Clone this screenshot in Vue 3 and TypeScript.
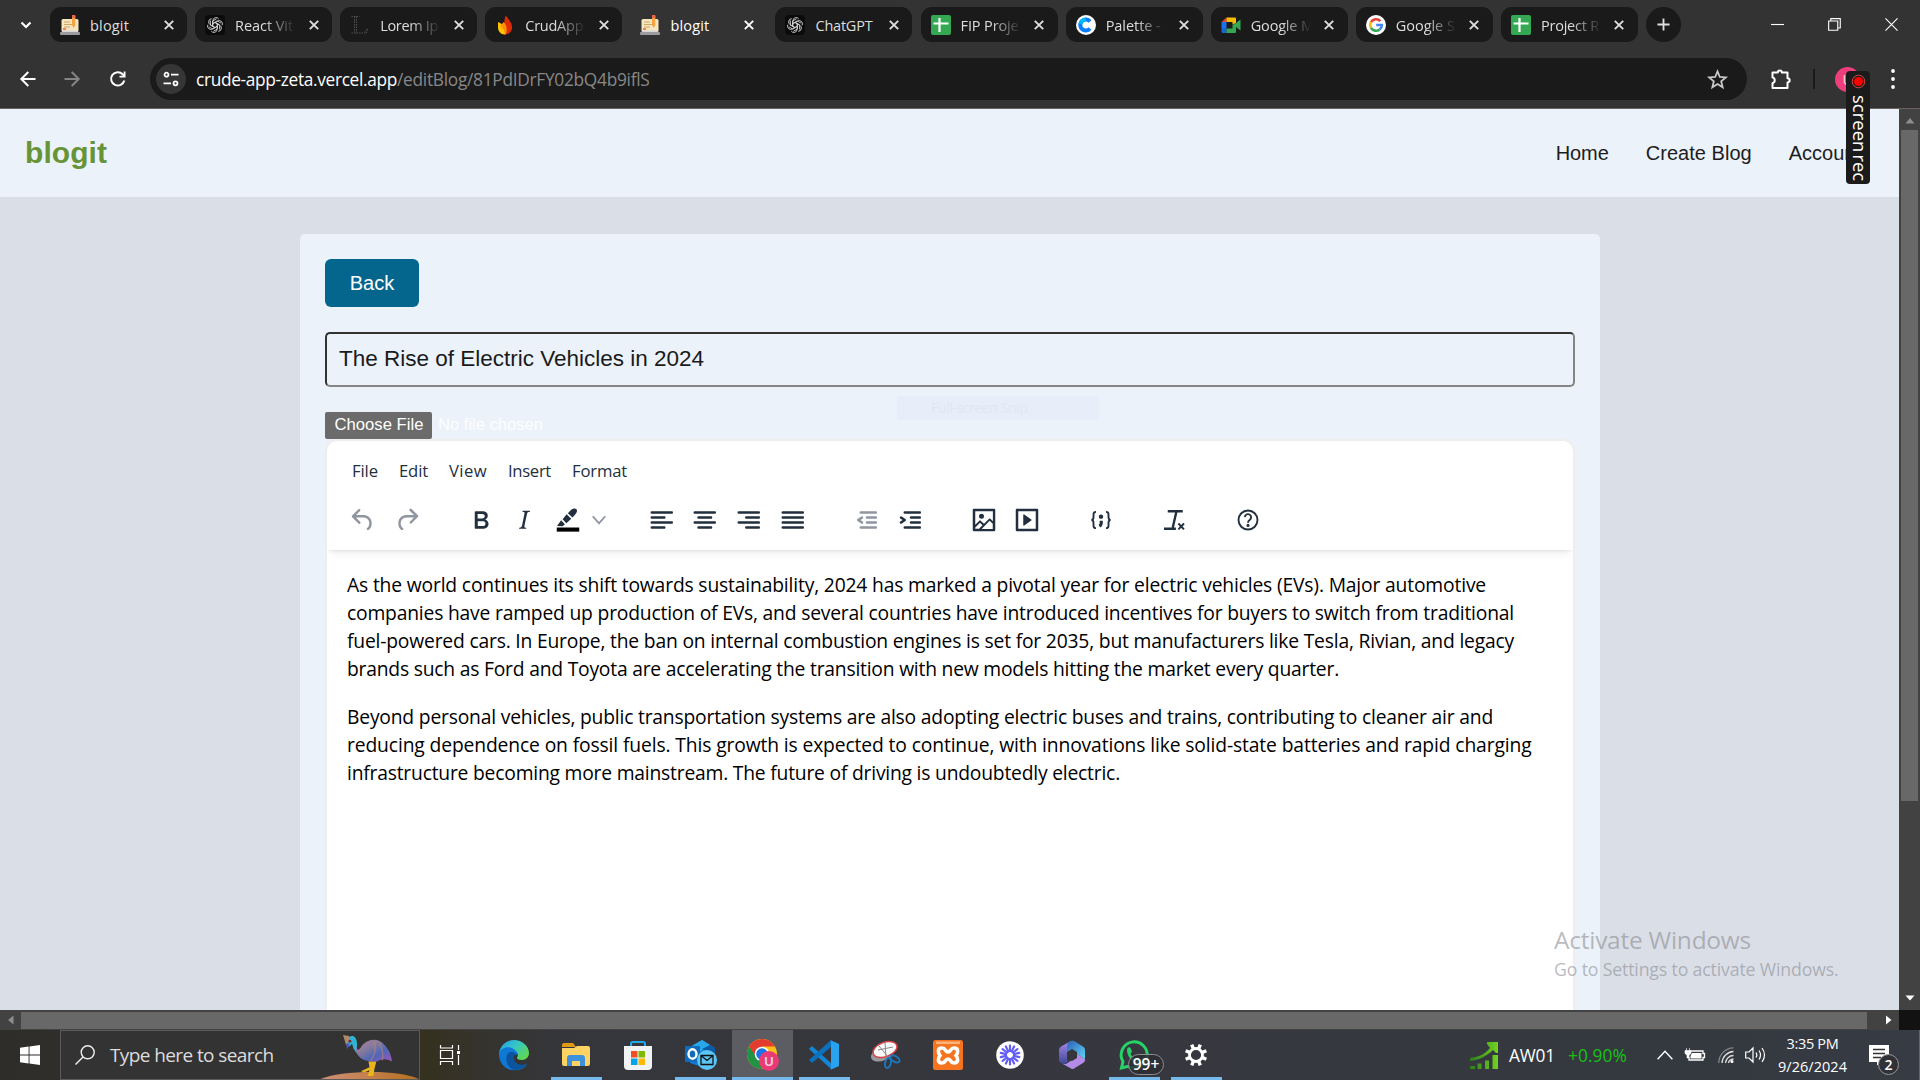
<script setup lang="ts">
import type { Directive } from 'vue'

/* Spreads letters so that a label takes exactly the given width. */
const vFit: Directive<HTMLElement, number> = {
  mounted(el, binding) {
    const count = (el.textContent ?? '').length
    const natural = el.getBoundingClientRect().width
    if (count > 0 && natural > 0) {
      el.style.letterSpacing = `${(binding.value - natural) / count}px`
    }
  },
}

interface Tab { icon: string; title: string; width: number; active?: boolean; cut?: boolean }
const tabs: Tab[] = [
  { icon: 'blog', title: 'blogit', width: 39 },
  { icon: 'gpt', title: 'React Vit', width: 58, cut: true },
  { icon: 'lorem', title: 'Lorem Ip', width: 58, cut: true },
  { icon: 'fire', title: 'CrudApp', width: 58, cut: true },
  { icon: 'blog', title: 'blogit', width: 39, active: true },
  { icon: 'gpt', title: 'ChatGPT', width: 57 },
  { icon: 'sheet', title: 'FIP Proje', width: 58, cut: true },
  { icon: 'coolors', title: 'Palette -', width: 55, cut: true },
  { icon: 'meet', title: 'Google M', width: 63, cut: true },
  { icon: 'google', title: 'Google S', width: 59, cut: true },
  { icon: 'sheet', title: 'Project R', width: 58, cut: true },
]

const menus = [
  { label: 'File', width: 26 },
  { label: 'Edit', width: 29 },
  { label: 'View', width: 38 },
  { label: 'Insert', width: 43 },
  { label: 'Format', width: 55 },
]

const bar = (x: number, y: number, w: number) =>
  `M${x} ${y}h${w}c.6 0 1 .4 1 1s-.4 1-1 1h-${w}a1 1 0 1 1 0-2Z`

interface Tool { name: string; path: string; gap: number; dim?: boolean }
const frame = 'M4 3h16c.6 0 1 .4 1 1v16c0 .6-.4 1-1 1H4a1 1 0 0 1-1-1V4c0-.6.4-1 1-1Z'
const tools: Tool[] = [
  { name: 'undo', gap: 0, dim: true, path: 'M6.4 8H12c3.7 0 6.2 2 6.8 5.1.6 2.7-.4 5.6-2.3 6.8a1 1 0 0 1-1-1.8c1.1-.6 1.8-2.7 1.4-4.6-.5-2.1-2.1-3.5-4.9-3.5H6.4l3.3 3.3a1 1 0 1 1-1.4 1.4l-5-5a1 1 0 0 1 0-1.4l5-5a1 1 0 0 1 1.4 1.4L6.4 8Z' },
  { name: 'redo', gap: 14, dim: true, path: 'M17.6 10H12c-2.8 0-4.4 1.4-4.9 3.5-.4 2 .3 4 1.4 4.6a1 1 0 1 1-1 1.8c-2-1.2-2.9-4.1-2.3-6.8.6-3 3-5.1 6.8-5.1h5.6l-3.3-3.3a1 1 0 1 1 1.4-1.4l5 5a1 1 0 0 1 0 1.4l-5 5a1 1 0 0 1-1.4-1.4l3.3-3.3Z' },
  { name: 'bold', gap: 44, path: 'M7.8 19c-.3 0-.5 0-.6-.2l-.2-.5V5.7c0-.2 0-.4.2-.5l.6-.2h5c1.5 0 2.7.3 3.5 1 .7.6 1.1 1.4 1.1 2.5a3 3 0 0 1-.6 1.9c-.4.6-1 1-1.6 1.2.4.1.9.3 1.3.6s.8.7 1 1.2c.4.4.5 1 .5 1.6 0 1.3-.4 2.3-1.3 3-.8.7-2.1 1-3.8 1H7.8Zm5-8.3c.6 0 1.2-.1 1.6-.5.4-.3.6-.7.6-1.3 0-1.1-.8-1.7-2.3-1.7H9.3v3.5h3.4Zm.5 6c.7 0 1.3-.1 1.7-.4.4-.4.6-.9.6-1.5s-.2-1-.7-1.4c-.4-.3-1-.4-2-.4H9.4v3.8h4Z' },
  { name: 'italic', gap: 13, path: 'm16.7 4.7-.1.9h-.3c-.6 0-1 0-1.4.3-.3.3-.4.6-.5 1.1l-2.1 9.8v.6c0 .5.4.8 1.4.8h.2l-.2.8H8l.2-.8h.2c1.1 0 1.8-.5 2-1.5l2-9.8.1-.5c0-.6-.4-.8-1.4-.8h-.3l.2-.9h5.8Z' },
  { name: 'highlight', gap: 14, path: '' },
  { name: 'chevron', gap: 1, dim: true, path: '' },
  { name: 'left', gap: 34, path: bar(3, 5, 16) + bar(3, 9, 10) + bar(3, 13, 16) + bar(3, 17, 10) },
  { name: 'center', gap: 13, path: bar(3, 5, 16) + bar(6, 9, 10) + bar(3, 13, 16) + bar(6, 17, 10) },
  { name: 'right', gap: 14, path: bar(3, 5, 16) + bar(9, 9, 10) + bar(3, 13, 16) + bar(9, 17, 10) },
  { name: 'justify', gap: 14, path: bar(3, 5, 16) + bar(3, 9, 16) + bar(3, 13, 16) + bar(3, 17, 16) },
  { name: 'outdent', gap: 43, dim: true, path: bar(7, 5, 12) + bar(12, 9, 7) + bar(12, 13, 7) + bar(7, 17, 12) + 'M8.600 13.200a1 1 0 0 1-1.2 1.6l-3-2a1 1 0 0 1 0-1.6l3-2a1 1 0 0 1 1.2 1.6L6.800 12l1.800 1.200Z' },
  { name: 'indent', gap: 14, path: bar(7, 5, 12) + bar(12, 9, 7) + bar(12, 13, 7) + bar(7, 17, 12) + 'M3.4 13.2a1 1 0 1 0 1.2 1.6l3-2a1 1 0 0 0 0-1.6l-3-2a1 1 0 1 0-1.2 1.6L5.2 12l-1.8 1.2Z' },
  { name: 'image', gap: 43, path: 'm5 15.7 3.3-3.2c.3-.3.7-.3 1 0L12 15l4.1-4c.3-.4.8-.4 1 0l2 1.9V5H5v10.7ZM5 18V19h3l2.8-2.9-2-2L5 17.9Zm14-3-2.5-2.4-6.4 6.5H19v-4ZM10 11a2 2 0 1 0 0-4 2 2 0 0 0 0 4Z' + frame },
  { name: 'media', gap: 13, path: frame + 'M5 5v14h14V5H5ZM9.8 7.6l5.6 4a.5.5 0 0 1 0 .8l-5.6 4A.5.5 0 0 1 9 16V8a.5.5 0 0 1 .8-.4Z' },
  { name: 'code', gap: 44, path: '' },
  { name: 'clear', gap: 43, path: '' },
  { name: 'help', gap: 44, path: '' },
]

const paragraphs = [
  [
    { text: 'As the world continues its shift towards sustainability, 2024 has marked a pivotal year for electric vehicles (EVs). Major automotive', width: 1139 },
    { text: 'companies have ramped up production of EVs, and several countries have introduced incentives for buyers to switch from traditional', width: 1167 },
    { text: 'fuel-powered cars. In Europe, the ban on internal combustion engines is set for 2035, but manufacturers like Tesla, Rivian, and legacy', width: 1167 },
    { text: 'brands such as Ford and Toyota are accelerating the transition with new models hitting the market every quarter.', width: 992 },
  ],
  [
    { text: 'Beyond personal vehicles, public transportation systems are also adopting electric buses and trains, contributing to cleaner air and', width: 1146 },
    { text: 'reducing dependence on fossil fuels. This growth is expected to continue, with innovations like solid-state batteries and rapid charging', width: 1184.500 },
    { text: 'infrastructure becoming more mainstream. The future of driving is undoubtedly electric.', width: 773 },
  ],
]

interface App { name: string; open?: boolean; focus?: boolean }
const apps: App[] = [
  { name: 'edge' },
  { name: 'explorer', open: true },
  { name: 'store' },
  { name: 'outlook', open: true },
  { name: 'chrome', open: true, focus: true },
  { name: 'vscode', open: true },
  { name: 'snip' },
  { name: 'xampp' },
  { name: 'burst' },
  { name: 'm365' },
  { name: 'whatsapp', open: true },
  { name: 'settings', open: true },
]
const rays = Array.from({ length: 14 }, (_, i) => i * (360 / 14))
const teeth = Array.from({ length: 8 }, (_, i) => i * 45 + 22.5)
</script>

<template>
  <div class="screen">
    <div class="browser">
      <div class="tabstrip">
        <svg class="tab-search" viewBox="0 0 12 12"><path d="M1.5 3.5 6 8l4.500-4.500" fill="none" stroke="#fff" stroke-width="2.200" /></svg>
        <div v-for="(tab, i) in tabs" :key="i" class="tab" :class="{ active: tab.active }">
          <svg class="fav" viewBox="0 0 20 20">
            <g v-if="tab.icon === 'blog'">
              <rect x="1.500" y="4" width="17" height="13" rx="1.500" fill="#f8e6bf" />
              <path d="M4 7h6M4 9.500h8M4 12h6" stroke="#cda869" stroke-width="1" />
              <path d="M3 14h3" stroke="#f0603a" stroke-width="1.500" />
              <path d="M12 1h3.300v9l-1.600 3L12 10z" fill="#f7a440" /><path d="M12 0h3.300v3H12z" fill="#e8664a" />
              <rect x="0" y="17" width="20" height="3" rx="1" fill="#9b9ba0" /><rect x="2" y="15.500" width="16" height="1.500" fill="#d8d8d8" />
            </g>
            <g v-else-if="tab.icon === 'gpt'">
              <rect width="20" height="20" rx="4" fill="#0b0b0b" />
              <g fill="none" stroke="#d6d6d6" stroke-width=".85">
                <path v-for="a in [0, 60, 120, 180, 240, 300]" :key="a" :transform="`rotate(${a} 10 10)`" d="M7.900 11.300V5.700a3.200 3.200 0 0 1 5.900-1.700M7.900 8.400l4.300-2.500 4 2.300" />
              </g>
            </g>
            <path v-else-if="tab.icon === 'lorem'" d="M1.500 1.500h8M4.500 1.500v16M6.500 1.500v16M1.500 18h15l1-4.500-2.500 3" fill="none" stroke="#505050" stroke-width="1" stroke-dasharray="1.500 1" />
            <g v-else-if="tab.icon === 'fire'">
              <path d="M10.500.5c4.500 5 6.500 8 6.500 11.500A6.800 6.800 0 0 1 10 19.500c-1-3-1.500-6-1-9 .3-3.500.5-6 1.500-10Z" fill="#dd2c00" />
              <path d="M3 7c2.500 1 7 3.500 7.500 12.400C6 20 3 16.500 3 12.500Z" fill="#ffc400" />
              <path d="M8.800 7C7.500 8.500 6 9.500 5.200 11c3 2 4.500 5 4.800 8.500 3-2.500 2-9-1.200-12.500Z" fill="#ff9100" />
            </g>
            <g v-else-if="tab.icon === 'sheet'">
              <rect width="20" height="20" rx="2" fill="#34a853" /><path d="M8.500 3v14M2.500 8.500h15" stroke="#fff" stroke-width="2.200" />
            </g>
            <g v-else-if="tab.icon === 'coolors'">
              <circle cx="10" cy="10" r="10" fill="#fff" />
              <path d="M14 6.500a5.500 5.500 0 1 0 0 7" fill="none" stroke="#0a7cff" stroke-width="4" /><path d="M4.500 9a5.500 5.500 0 0 1 5.500-4.500" fill="none" stroke="#00b8f5" stroke-width="4" />
            </g>
            <g v-else-if="tab.icon === 'meet'">
              <path d="M.5 7 5.500 2.500V7Z" fill="#ea4335" /><path d="M5.500 2.500H14q1 0 1 1V8l-3.500 1.500V7h-6Z" fill="#fbbc04" />
              <path d="M.5 7h5v6h-5Z" fill="#1a73e8" /><path d="M.5 13h5v5H2q-1.500 0-1.500-1.500Z" fill="#1967d2" />
              <path d="M5.500 13.500h6V10L15 8l4.500-3.500v11L15 12v5q0 1-1 1H5.500Z" fill="#34a853" />
            </g>
            <g v-else>
              <circle cx="10" cy="10" r="10" fill="#fff" />
              <g fill="none" stroke-width="2.600">
                <path d="M14.400 6.200A5.800 5.800 0 0 0 5 7.200" stroke="#ea4335" /><path d="M5 7.200a5.800 5.800 0 0 0 0 5.600" stroke="#fbbc05" />
                <path d="M5 12.800a5.800 5.800 0 0 0 8.700 1.600" stroke="#34a853" /><path d="M13.700 14.400A5.500 5.500 0 0 0 15.800 10H10.200" stroke="#4285f4" />
              </g>
            </g>
          </svg>
          <span class="tab-title" :class="{ cut: tab.cut }"><span v-fit="tab.width">{{ tab.title }}</span></span>
          <svg class="x" viewBox="0 0 10 10"><path d="m.8.8 8.400 8.400M9.200.8.8 9.200" stroke="currentColor" stroke-width="1.900" /></svg>
        </div>
        <div class="newtab"><svg viewBox="0 0 14 14"><path d="M7 .5v13M.5 7h13" stroke="#ddd" stroke-width="2" /></svg></div>
        <div class="winbtns">
          <svg viewBox="0 0 14 14"><path d="M0 7h14" stroke="#fff" stroke-width="1.200" /></svg>
          <svg viewBox="0 0 14 14"><path d="M.7 3.200h9.800v10H.7zM3 3V.7h10.200v10.100h-2.500" fill="none" stroke="#fff" stroke-width="1.200" /></svg>
          <svg viewBox="0 0 14 14"><path d="m.5.5 13 13M13.500.5l-13 13" stroke="#fff" stroke-width="1.200" /></svg>
        </div>
      </div>

      <div class="toolbar">
        <svg class="nav-i" viewBox="0 0 16 16"><path d="M15.500 8H1.500M8.300 1 1.300 8l7 7" fill="none" stroke="#fff" stroke-width="2" /></svg>
        <svg class="nav-i fwd" viewBox="0 0 16 16"><path d="M.5 8h14M7.700 1l7 7-7 7" fill="none" stroke="#858585" stroke-width="2" /></svg>
        <svg class="nav-i reload" viewBox="0 0 16 16"><path d="M14.300 9.500A6.700 6.700 0 1 1 12.700 3.300L14.500 5" fill="none" stroke="#fff" stroke-width="2" /><path d="M15.500.5v6h-6V4.800h4.200V.5Z" fill="#fff" /></svg>
        <div class="omnibox">
          <div class="siteinfo">
            <svg viewBox="0 0 16 16" fill="none" stroke="#fff" stroke-width="1.800"><circle cx="3.500" cy="3.700" r="2" /><path d="M8 3.700h7.500M.5 12.300H8" /><circle cx="12.500" cy="12.300" r="2" /></svg>
          </div>
          <span class="url"><b v-fit="201">crude-app-zeta.vercel.app</b><span v-fit="252.500">/editBlog/81PdIDrFY02bQ4b9iflS</span></span>
          <svg class="star" viewBox="0 0 20 20"><path d="m10 2.200 2.200 5.400 5.700.4-4.400 3.700 1.400 5.700L10 14.300l-4.900 3.100 1.400-5.700L2.100 8l5.700-.4Z" fill="none" stroke="#c9c9c9" stroke-width="1.700" /></svg>
        </div>
        <svg class="puzzle" viewBox="0 0 22 22"><path d="M2.500 4.500h5.300a2 2 0 0 1 4 0h5.700v5.700a2 2 0 0 1 0 4.300V20h-15v-4.800a3 3 0 0 0 0-5.800Z" fill="none" stroke="#fff" stroke-width="2" stroke-linejoin="round" /></svg>
        <div class="divider"></div>
        <div class="avatar">U</div>
        <svg class="dots" viewBox="0 0 6 18"><g fill="#fff"><circle cx="3" cy="1" r="1.900" /><circle cx="3" cy="9" r="1.900" /><circle cx="3" cy="17" r="1.900" /></g></svg>
      </div>
    </div>

    <div class="viewport">
      <div class="page">
        <header class="site-head">
          <span class="logo"><span v-fit="82">blogit</span></span>
          <nav><span v-fit="53">Home</span><span v-fit="106">Create Blog</span><span>Account</span></nav>
        </header>
        <main class="card">
          <button class="back">Back</button>
          <div class="title-input"><span v-fit="365">The Rise of Electric Vehicles in 2024</span></div>
          <div class="file-row"><span class="choose"><span v-fit="89">Choose File</span></span><span v-fit="105">No file chosen</span></div>
          <div class="snip-tip">Full-screen Snip</div>
          <section class="editor">
            <div class="editor-head">
              <div class="menubar"><span v-for="m in menus" :key="m.label" v-fit="m.width">{{ m.label }}</span></div>
              <div class="tools">
                <svg v-for="t in tools" :key="t.name" viewBox="0 0 24 24" :class="['tool', { dim: t.dim }]" :style="{ marginLeft: t.gap + 'px' }">
                  <path v-if="t.path" :d="t.path" fill="currentColor" :fill-rule="t.name === 'image' || t.name === 'media' ? 'evenodd' : 'nonzero'" />
                  <g v-else-if="t.name === 'highlight'">
                    <path d="m3.200 16.800 3.300-4.600 3 3.200-1.800 1.700ZM7.700 11.400l3.200-4 3.700 3.700-3.900 3.500ZM11.900 6.500l2-2.100c1.300-1.400 3.600-2.300 4.700-1.200 1.200 1.200.4 3.400-1 4.600l-2 2.100Z" fill="currentColor" />
                    <path d="M3 18h18v3.300H3z" fill="#000" />
                  </g>
                  <path v-else-if="t.name === 'chevron'" d="m7 9 5 5.700L17 9" fill="none" stroke="currentColor" stroke-width="1.500" />
                  <g v-else-if="t.name === 'code'" fill="none" stroke="currentColor" stroke-width="1.500">
                    <path d="M8 5.500c-1.500 0-2 .6-2 2v2.300c0 1.500-.7 2.200-1.700 2.200 1 0 1.700.7 1.700 2.200v2.300c0 1.400.5 2 2 2M16 5.500c1.500 0 2 .6 2 2v2.300c0 1.500.7 2.200 1.700 2.200-1 0-1.700.7-1.700 2.200v2.300c0 1.400-.5 2-2 2" />
                    <circle cx="12" cy="9.300" r="1" fill="currentColor" /><path d="M12.200 12.600v2q0 1.500-1.500 2.300" stroke-width="2.500" />
                  </g>
                  <g v-else-if="t.name === 'clear'" fill="none" stroke="currentColor" stroke-width="1.900">
                    <path d="M7 5h12M14 5l-3 13M4 19h9.500" /><path d="m15.500 14.800 4.500 4.700M20 14.800l-4.500 4.700" stroke-width="1.500" />
                  </g>
                  <g v-else fill="none" stroke="currentColor" stroke-width="1.500">
                    <circle cx="12" cy="12" r="7.600" /><path d="M9.500 9.700a2.500 2.500 0 1 1 4 2.100c-1 .7-1.500 1.100-1.500 2.300" /><circle cx="12" cy="16.300" r=".5" fill="currentColor" />
                  </g>
                </svg>
              </div>
            </div>
            <div class="editor-body">
              <p v-for="(p, i) in paragraphs" :key="i">
                <span v-for="line in p" :key="line.text" v-fit="line.width" class="line">{{ line.text }}</span>
              </p>
            </div>
          </section>
        </main>
        <div class="activate"><div class="big"><span v-fit="197">Activate Windows</span></div><div class="small"><span v-fit="284.500">Go to Settings to activate Windows.</span></div></div>
      </div>
      <div class="vscroll">
        <svg viewBox="0 0 10 6"><path d="M5 0 9.500 5.500H.5Z" fill="#8d8d8d" /></svg>
        <div class="vthumb"></div>
        <svg class="down" viewBox="0 0 10 6"><path d="M5 5.500.5.500h9Z" fill="#fff" /></svg>
      </div>
    </div>
    <div class="hscroll">
      <svg viewBox="0 0 6 10"><path d="M0 5 5.500.5v9Z" fill="#8d8d8d" /></svg>
      <div class="hthumb"></div>
      <svg class="rgt" viewBox="0 0 6 10"><path d="M5.500 5 0 .5v9Z" fill="#fff" /></svg>
      <div class="corner"></div>
    </div>

    <div class="taskbar">
      <div class="start"><svg viewBox="0 0 20 20"><path d="M0 2.700 8.600 1.500v8H0ZM9.500 1.400 20 0v9.500H9.500ZM0 10.500h8.600v8L0 17.300ZM9.500 10.500H20V20L9.500 18.600Z" fill="#fff" /></svg></div>
      <div class="search">
        <svg class="mag" viewBox="0 0 20 20"><circle cx="12.700" cy="7.300" r="6.500" fill="none" stroke="#eee" stroke-width="1.400" /><path d="m8 12-7.500 7.500" stroke="#eee" stroke-width="1.500" /></svg>
        <span v-fit="163.500">Type here to search</span>
        <svg class="bird" viewBox="0 0 100 49">
          <defs>
            <linearGradient id="body" x1="0" y1="0" x2="1" y2="1"><stop offset="0" stop-color="#b07bb0" /><stop offset=".35" stop-color="#8a7c9a" /><stop offset=".65" stop-color="#4f66b8" /><stop offset="1" stop-color="#a256b8" /></linearGradient>
            <linearGradient id="hill" x1="0" x2="1"><stop offset="0" stop-color="#d08f78" /><stop offset="1" stop-color="#b5701f" /></linearGradient>
          </defs>
          <path d="M0 49C20 40 82 39 100 49Z" fill="url(#hill)" />
          <path d="M49 31h8l-2 8-1 7h-6l2-6-5 2-4-1 9-4Z" fill="#e9b51d" />
          <path d="M34 15c0 6 3 6 7 2 5-9 18-11 24-3 5 5 7 10 8 17-6-3-10-3-15 0-12 1-21-2-24-16Z" fill="url(#body)" />
          <path d="M55 11c2 8 0 15-4 19M60 12c4 7 4 13 3 18" fill="none" stroke="#b58a72" stroke-width="1.400" opacity=".6" />
          <path d="M34 9c3 3 2 8 5 12l-5-2Z" fill="#f0508e" />
          <path d="M27 9c2-5 9-6 10 2 1 5-1 7 0 11-4-3-4-8-5-9-1 2-3 3-5 3Z" fill="#31b3d6" />
          <path d="m26 12 4 1-3 6Z" fill="#4b56c8" /><path d="m23 4 6 1 1 4-4 5Z" fill="#ad8a6a" /><circle cx="30" cy="10.500" r="1.500" fill="#6f2d32" />
        </svg>
      </div>
      <div class="taskview"><svg viewBox="0 0 20 20"><path d="M.5 0v3h12V0M.5 5.500h12v8H.5zM.5 20v-3.500h12V20M18.500 0v5M18.500 10v10" fill="none" stroke="#fff" stroke-width="1.200" /><path d="M17 6h3v3h-3z" fill="#fff" /></svg></div>
      <div v-for="a in apps" :key="a.name" class="app" :class="{ open: a.open, focus: a.focus }">
        <svg v-if="a.name === 'edge'" viewBox="0 0 30 30">
          <defs><linearGradient id="e1" x1="0" y1="0" x2="1" y2=".7"><stop offset="0" stop-color="#239be8" /><stop offset=".5" stop-color="#35c6c8" /><stop offset="1" stop-color="#5ed94e" /></linearGradient></defs>
          <path d="M0 14C1 5 8 0 15 0c8 0 15 6 15 13 0 4-3 7-7 7-3 0-5-1-5-2 0-1 1-1 1-4Z" fill="url(#e1)" />
          <path d="M0 14C1 8 8 6 13 8c4 2 6 5 6 7-6-2-8 4-5 8 4 4 9 4 14 1-3 5-8 7-15 6C5 29 0 22 0 14Z" fill="#0f78d4" />
          <path d="M10 12.500c-5 4-3 16 6 17.500 5 0 9-2 12.500-7-4 2.500-9 2.500-12-1-2.500-3-2-6 .5-8-2-2-5-2.500-7-1.500Z" fill="#0b559e" />
        </svg>
        <svg v-else-if="a.name === 'explorer'" viewBox="0 0 30 30">
          <path d="M1 5q0-2 2-2h9l3 4H1Z" fill="#e09a12" /><path d="M1 8h12l3-2h11q2 0 2 2v16q0 2-2 2H3q-2 0-2-2Z" fill="#ffd264" />
          <path d="M6 26V18q0-3 3-3h12q3 0 3 3v8h-5v-5h-8v5Z" fill="#3c91dc" />
        </svg>
        <svg v-else-if="a.name === 'store'" viewBox="0 0 30 30">
          <path d="M8 8V4q0-2 2-2h10q2 0 2 2v4" fill="none" stroke="#20a9ee" stroke-width="2" /><path d="M1 6h28v20q0 4-4 4H5q-4 0-4-4Z" fill="#f1f2f4" />
          <path d="M8 11h6.500v6.500H8z" fill="#f25022" /><path d="M15.500 11H22v6.500h-6.500z" fill="#7fba00" /><path d="M8 18.500h6.500V25H8z" fill="#00a4ef" /><path d="M15.500 18.500H22V25h-6.500z" fill="#ffb900" />
        </svg>
        <svg v-else-if="a.name === 'outlook'" class="wide" viewBox="0 0 32 32">
          <path d="M5 8 17 1l13 8v16L17 28 5 24Z" fill="#1479d3" /><path d="m5 8 12-7 8 5-12 8Z" fill="#28a8ea" /><path d="m17 10 8-4 5 3v6Z" fill="#0c59a4" />
          <rect x="0" y="7" width="15" height="16" rx="1" fill="#0f6cbd" /><ellipse cx="7.500" cy="15" rx="4" ry="4.700" fill="none" stroke="#fff" stroke-width="2.400" />
          <circle cx="22" cy="21" r="10" fill="#5bc5f5" /><path d="M16 16.500h12v9H16zl6 5 6-5" fill="none" stroke="#111" stroke-width="1.300" />
        </svg>
        <svg v-else-if="a.name === 'chrome'" class="wide" viewBox="0 0 32 32">
          <circle cx="15" cy="15" r="15" fill="#fbc116" /><path d="M2 7.500A15 15 0 0 1 28 7.500H15l-6.500 11Z" fill="#e33b2e" /><path d="M2 7.500A15 15 0 0 0 15 30l6.500-11.200H10Z" fill="#229342" />
          <circle cx="15" cy="15" r="7.300" fill="#fff" /><circle cx="15" cy="15" r="5.800" fill="#1a73e8" />
          <circle cx="22" cy="22" r="10" fill="#e93a76" /><text x="22" y="27" text-anchor="middle" font-size="13" fill="#f8c8d9" font-family="Liberation Sans" font-weight="bold">U</text>
        </svg>
        <svg v-else-if="a.name === 'vscode'" viewBox="0 0 30 30">
          <path d="m0 9 3-3 19 17v6Z" fill="#1485d2" /><path d="m0 20 3 3L22 7V0Z" fill="#0b71bd" /><path d="m21 0 9 4v22l-9 4 1-1V1Z" fill="#27a3f0" />
        </svg>
        <svg v-else-if="a.name === 'snip'" viewBox="0 0 30 30">
          <ellipse cx="13" cy="13" rx="12.500" ry="7" fill="#999a9e" transform="rotate(-25 13 16)" />
          <ellipse cx="14" cy="9.500" rx="12.500" ry="7.200" transform="rotate(-20 14 9.500)" fill="#fafafa" stroke="#d64045" stroke-width="1.400" />
          <path d="m8 6 10 12M14 2l1 16M7 10l15-3" stroke="#888" fill="none" /><ellipse cx="17" cy="23" rx="2.800" ry="5" fill="none" stroke="#1a76bd" stroke-width="2" transform="rotate(15 17 23)" /><ellipse cx="24" cy="19" rx="5" ry="2.800" fill="none" stroke="#1a76bd" stroke-width="2" transform="rotate(30 24 19)" />
        </svg>
        <svg v-else-if="a.name === 'xampp'" viewBox="0 0 30 30">
          <rect width="30" height="30" rx="2.500" fill="#f4741f" /><path d="M3 1.500h24v2.500H3z" fill="#ffb37c" />
          <path d="M9 8c4 0 3 4 6 4s2-4 6-4c5 0 4 5 2 7.500 2 2.500 3 7.500-2 7.500-4 0-3-4-6-4s-2 4-6 4c-5 0-4-5-2-7.500C5 13 4 8 9 8Z" fill="none" stroke="#fff" stroke-width="3.600" />
        </svg>
        <svg v-else-if="a.name === 'burst'" viewBox="0 0 30 30">
          <circle cx="15" cy="15" r="13.800" fill="#fff" />
          <path v-for="r in rays" :key="r" :transform="`rotate(${r} 15 15)`" d="M15 11V5.500" stroke="#625df5" stroke-width="2.200" stroke-linecap="round" />
          <circle cx="15" cy="15" r="4" fill="none" stroke="#625df5" stroke-width="1.800" />
        </svg>
        <svg v-else-if="a.name === 'm365'" viewBox="0 0 30 30">
          <defs>
            <linearGradient id="m1" x1="0" y1="0" x2="0" y2="1"><stop offset="0" stop-color="#a78bec" /><stop offset="1" stop-color="#3d4594" /></linearGradient>
            <linearGradient id="m2" x1="0" y1="0" x2="1" y2="1"><stop offset="0" stop-color="#2a5fb8" /><stop offset="1" stop-color="#62d5f5" /></linearGradient>
          </defs>
          <path d="M14 1 4 6.500Q2 8 2 10v10q0 2 2 3l3 1.500 4-3-1-1.500V9q0-2 2-3l5-3Z" fill="url(#m1)" />
          <path d="M11 2.500 14 1q1.500-.7 3 0l9 5.500q2 1 2 3.500v9l-8-5v-2L15 9l-5 3V7Z" fill="url(#m2)" />
          <path d="m20 14 8 5v1q0 2-2 3l-9 5.500q-1.500 1-3 0L5 23.500c3 1.500 5 0 7-1.500l8-5Z" fill="#b58be8" />
          <path d="m15 9.500 5 3v5.500l-5 3-5-3v-5.500Z" fill="#36373d" />
        </svg>
        <svg v-else-if="a.name === 'whatsapp'" viewBox="0 0 30 30">
          <path d="M2.500 28 4 21.500A13 13 0 1 1 9 26.300Z" fill="none" stroke="#25d366" stroke-width="3" /><path d="M8 10c0-3 3-4 4-1l1 3-1.500 1.500c1 3 3 4 5 5.500l2-1.500 3 2c1 2-2 4-4 3.500C12 22 8 15 8 10Z" fill="#25d366" />
        </svg>
        <svg v-else class="gear" viewBox="0 0 30 30"><circle cx="15" cy="15" r="6.500" fill="none" stroke="#fff" stroke-width="2.800" /><path v-for="t in teeth" :key="t" :transform="`rotate(${t} 15 15)`" d="M15 8V3.800" stroke="#fff" stroke-width="3.400" /></svg>
        <span v-if="a.name === 'whatsapp'" class="count">99+</span>
      </div>

      <div class="tray">
        <svg class="stock" viewBox="0 0 28 28"><defs><linearGradient id="g" gradientUnits="userSpaceOnUse" x1="0" x2="28"><stop offset="0" stop-color="#2a7d1c" /><stop offset="1" stop-color="#72d321" /></linearGradient></defs><path d="M0 17C9 16 15 13 20 7l-3-4V1h11v11h-2l-3-3C17 15 9 19 0 20Z" fill="url(#g)" /><path d="M0 25h5v3H0zM7.500 22.500h4V28h-4zM15 19.500h4V28h-4zM22.500 14H28v14h-5.500z" fill="url(#g)" /></svg>
        <span class="sym"><span v-fit="46">AW01</span></span><span class="chg"><span v-fit="59">+0.90%</span></span>
        <svg class="up" viewBox="0 0 16 10"><path d="m.6 9.300L8 1.300l7.400 8" fill="none" stroke="#fff" stroke-width="1.400" /></svg>
        <svg class="batt" viewBox="0 0 20 14"><path d="M6 3h12v2.500h1.500v4H18V12H4V9" fill="none" stroke="#fff" stroke-width="1.300" /><path d="M7 5h9.500v5.500H5.500V8Z" fill="#fff" /><path d="M1.500 0v3M4.500 0v3M0 2.500h6v3L4 7v3H2V7L0 5.500Z" fill="#fff" stroke="#fff" stroke-width=".6" /></svg>
        <svg class="wifi" viewBox="0 0 16 16" fill="none" stroke-width="1.300"><path d="M.8 16A15 15 0 0 1 15.500.8" stroke="#85868a" /><path d="M4 16A12 12 0 0 1 15.500 4.500M7.500 16a8 8 0 0 1 8-7.500" stroke="#ddd" /><path d="M10.500 16q.5-3.500 5-4" stroke="#ddd" /><circle cx="14" cy="14.500" r="1.500" fill="#fff" /></svg>
        <svg class="vol" viewBox="0 0 21 18" fill="none" stroke="#fff" stroke-width="1.200"><path d="M.7 6H4l4-4v14l-4-4H.7ZM11 6.500q1.700 2.500 0 5M14 4.500q3 4.500 0 9M17 2q5 7 0 14" /></svg>
        <div class="clock"><span v-fit="52">3:35 PM</span><span v-fit="69">9/26/2024</span></div>
        <div class="notif"><svg viewBox="0 0 20 20"><path d="M0 0h20v17h-8l-4 3.500V17H0Z" fill="#fff" /><path d="M4 4.500h12M4 8.500h12M4 12.500h8" stroke="#333" stroke-width="1.300" /></svg><span>2</span></div>
      </div>
    </div>

    <div class="recorder">
      <svg viewBox="0 0 16 16"><circle cx="8" cy="8" r="6.700" fill="none" stroke="#e04b4b" stroke-width="1" /><circle cx="8" cy="8" r="4.800" fill="#f00" /></svg>
      <span class="rec-text">screen<i></i>rec</span>
    </div>
  </div>
</template>

<style>
html, body { margin: 0; overflow: hidden; background: #333; }
</style>

<style scoped>
* { box-sizing: border-box; }
svg { display: block; flex: none; overflow: visible; }
.screen { width: 1920px; height: 1080px; position: relative; overflow: hidden; display: flex; flex-direction: column; font-family: "Open Sans", "Noto Sans", sans-serif; white-space: nowrap; }
.screen span { flex: none; }
.browser { height: 109px; flex: none; background: #333; border-bottom: 1px solid #6b6160; }
.tabstrip { height: 50px; display: flex; align-items: flex-start; padding-top: 7px; }
.tab-search { width: 12px; height: 12px; margin: 12px 18.500px 0 19.500px; }
.tab { width: 137px; height: 35px; margin-right: 8.100px; border-radius: 11px; background: #1a1a1a; flex: none; display: flex; align-items: center; padding-left: 10px; color: #dedede; }
.tab.active { background: transparent; color: #fff; }
.fav { width: 20px; height: 20px; }
.tab-title { width: 66px; margin-left: 10px; overflow: hidden; font-size: 14.500px; line-height: 25px; padding-top: 1px; }
.tab-title > span { display: inline-block; }
.tab-title.cut { -webkit-mask-image: linear-gradient(90deg, #000 45%, transparent 92%); mask-image: linear-gradient(90deg, #000 45%, transparent 92%); }
.x { width: 10px; height: 10px; margin-left: 7.500px; }
.newtab { width: 35px; height: 35px; border-radius: 50%; background: #1a1a1a; display: flex; align-items: center; justify-content: center; }
.newtab svg { width: 13px; height: 13px; }
.winbtns { margin: 11px 22px 0 auto; display: flex; gap: 44px; }
.winbtns svg { width: 13px; height: 13px; }
.toolbar { height: 58px; display: flex; align-items: center; padding-left: 19.500px; }
.nav-i { width: 16px; height: 16px; }
.fwd { margin-left: 28.500px; }
.reload { margin-left: 29.500px; }
.omnibox { margin-left: 24.500px; width: 1597px; height: 42px; border-radius: 21px; background: #1a1a1a; display: flex; align-items: center; padding-left: 6px; }
.siteinfo { width: 30px; height: 30px; border-radius: 50%; background: #363636; display: flex; align-items: center; justify-content: center; }
.siteinfo svg { width: 16px; height: 16px; }
.url { margin-left: 10px; font-size: 17.300px; line-height: 26px; padding-top: 1px; display: flex; color: #888; }
.url b { color: #fff; font-weight: 400; }
.star { width: 21px; height: 21px; margin-left: auto; margin-right: 19px; }
.puzzle { width: 22px; height: 22px; margin-left: 23px; }
.divider { width: 2px; height: 20px; margin-left: 21px; background: #191919; }
.avatar { width: 25px; height: 25px; margin-left: 20px; border-radius: 50%; background: #ee3f7c; color: #f9d5e2; font-size: 14px; line-height: 25px; text-align: center; }
.dots { width: 6px; height: 18px; margin-left: 30px; }

.viewport { height: 901px; flex: none; display: flex; }
.page { width: 1899px; height: 901px; background: #dadee7; position: relative; overflow: hidden; font-family: "Liberation Sans", Arial, sans-serif; }
.site-head { height: 88px; background: #ebf2fa; display: flex; align-items: center; justify-content: space-between; padding: 0 38px 0 25px; }
.logo { font-size: 30px; font-weight: 700; color: #679436; }
.logo span { display: inline-block; }
.site-head nav { display: flex; gap: 37px; font-size: 20px; color: #1d1d1d; }
.card { width: 1300px; height: 800px; margin: 37px 0 0 300px; padding: 25px; border-radius: 5px; background: #ebf2fa; display: flex; flex-direction: column; align-items: flex-start; position: relative; }
.back { width: 94px; height: 48px; flex: none; padding: 0; border: 0; border-radius: 6px; background: #05668d; color: #fff; font: 20px "Liberation Sans", Arial, sans-serif; }
.title-input { width: 1250px; height: 55px; flex: none; margin-top: 25px; border: 2px solid; border-color: #333 #858585 #858585 #333; border-radius: 5px; padding: 0 12px 1px; display: flex; align-items: center; font-size: 22.500px; color: #1a1a1a; }
.file-row { height: 27px; flex: none; margin-top: 25px; display: flex; align-items: center; gap: 6px; font-size: 16.667px; line-height: 20px; color: #fcfeff; }
.file-row > span + span { padding-bottom: 2px; }
.choose { width: 107px; height: 27px; padding: 0 0 2px 1px; border-radius: 2px; background: #6b6b6b; color: #fff; display: flex; align-items: center; justify-content: center; }
.snip-tip { position: absolute; left: 597px; top: 162px; width: 202px; height: 24px; padding-left: 34px; background: #e7edf9; color: #e0e7f3; font: 14px/24px "Open Sans", sans-serif; letter-spacing: -.4px; }
.editor { width: 1250px; height: 760px; flex: none; border: 2px solid #eee; border-radius: 12px; background: #fff; overflow: hidden; color: #222f3e; font-family: "Open Sans", "Noto Sans", sans-serif; }
.editor-head { height: 109px; position: relative; box-shadow: 0 2px 3px -2px rgba(34, 47, 62, .15), 0 7px 8px -4px rgba(34, 47, 62, .09); }
.menubar { height: 58px; display: flex; gap: 21px; padding: 0 0 0 25px; align-items: center; font-size: 16.700px; }
.tools { display: flex; align-items: center; height: 42px; padding-left: 21px; }
.tool { width: 30px; height: 30px; color: #222f3e; }
.dim { color: #9096a0; }
.editor-body { padding: 21px 20px; font-size: 19.300px; line-height: 28px; color: #000; }
p { margin: 0 0 20px; }
.line { display: block; width: fit-content; }
.activate { position: absolute; left: 1554px; top: 813px; font-family: "Open Sans", sans-serif; color: rgba(139, 141, 146, .6); display: flex; flex-direction: column; }
.activate span { display: inline-block; }
.big { font-size: 24.500px; line-height: 36px; }
.small { font-size: 17.700px; line-height: 23px; }
.vscroll { width: 21px; background: #424242; display: flex; flex-direction: column; align-items: center; padding-top: 9px; }
.vscroll svg { width: 10px; height: 6px; }
.vthumb { width: 17px; height: 671px; flex: none; margin-top: 6px; background: #686868; }
.vscroll .down { margin: auto 0 9px; }
.hscroll { height: 20px; flex: none; background: #424242; display: flex; align-items: center; padding-left: 8px; }
.hscroll svg { width: 6px; height: 10px; }
.hthumb { width: 1846px; height: 17px; margin-left: 7px; background: #686868; flex: none; }
.hscroll .rgt { margin-left: 19px; }
.corner { width: 21px; height: 20px; margin-left: auto; background: #121212; }

.taskbar { height: 50px; flex: none; display: flex; background: linear-gradient(90deg, #2e2d29 0, #2f2e2b 60px, #35311f 425px, #35332d 480px, #35363b 560px, #37383f 1200px, #34383f 1700px, #373b44 1920px); color: #fff; }
.start { width: 60px; display: flex; align-items: center; justify-content: center; }
.start svg { width: 20px; height: 20px; }
.search { width: 360px; border: 1px solid #5a5a5a; background: #333; display: flex; align-items: center; font-size: 19px; color: #dcdcdc; padding-left: 14px; }
.mag { width: 20px; height: 20px; }
.search > span { margin-left: 15px; }
.bird { width: 99px; height: 48px; margin-left: auto; }
.taskview { width: 63px; display: flex; align-items: center; padding-left: 20px; }
.taskview svg { width: 20px; height: 20px; }
.app { width: 62px; flex: none; display: flex; align-items: center; justify-content: center; position: relative; }
.app svg { width: 30px; height: 30px; }
.app svg.wide { width: 32px; height: 32px; margin-left: 1px; }
.app svg.gear { margin-right: 1px; }
.app.focus { background: linear-gradient(#5c5d62, #5c5d62) center / 61px 100% no-repeat; }
.app.open::after { content: ""; position: absolute; bottom: 0; left: 5.500px; width: 51px; height: 3px; background: #76b9ed; }
.app.focus::after { left: .5px; width: 61px; }
.count { position: absolute; left: 25px; top: 24px; width: 36px; height: 21px; border: 1px solid #8d8d92; border-radius: 11px; background: rgba(45, 46, 50, .85); font-size: 15.500px; line-height: 19px; font-weight: 600; text-align: center; }
.tray { margin-left: auto; display: flex; align-items: center; }
.stock { width: 28px; height: 28px; }
.sym { margin-left: 11px; font-size: 17.300px; }
.chg { margin-left: 13px; font-size: 17.300px; color: #16c116; }
.sym span, .chg span { display: inline-block; }
.up { width: 16px; height: 10px; margin-left: 30px; }
.batt { width: 20px; height: 14px; margin-left: 12px; }
.wifi { width: 16px; height: 16px; margin-left: 13px; }
.vol { width: 21px; height: 18px; margin-left: 11px; }
.clock { width: 69px; margin-left: 12px; display: flex; flex-direction: column; align-items: center; font-size: 14.500px; line-height: 23px; }
.notif { width: 51px; height: 50px; margin-left: 22px; position: relative; padding-top: 15px; box-shadow: inset -5px 0 0 -4px #666; }
.notif svg { width: 20px; height: 20px; }
.notif span { position: absolute; left: 9px; top: 24px; width: 21px; height: 21px; border: 1px solid #98989c; border-radius: 50%; background: #303237; font-size: 14px; font-weight: 600; line-height: 19px; text-align: center; }
.recorder { position: absolute; left: 1846px; top: 71px; width: 24px; height: 113px; border-radius: 4px; background: #1b1b1b; color: #fff; display: flex; flex-direction: column; align-items: center; padding-top: 3px; }
.recorder svg { width: 15px; height: 15px; }
.rec-text { writing-mode: vertical-rl; margin: 6px -3px 0 0; font: 500 18.500px/24px "Open Sans", sans-serif; }
.rec-text i { display: inline-block; height: 2px; }
</style>
